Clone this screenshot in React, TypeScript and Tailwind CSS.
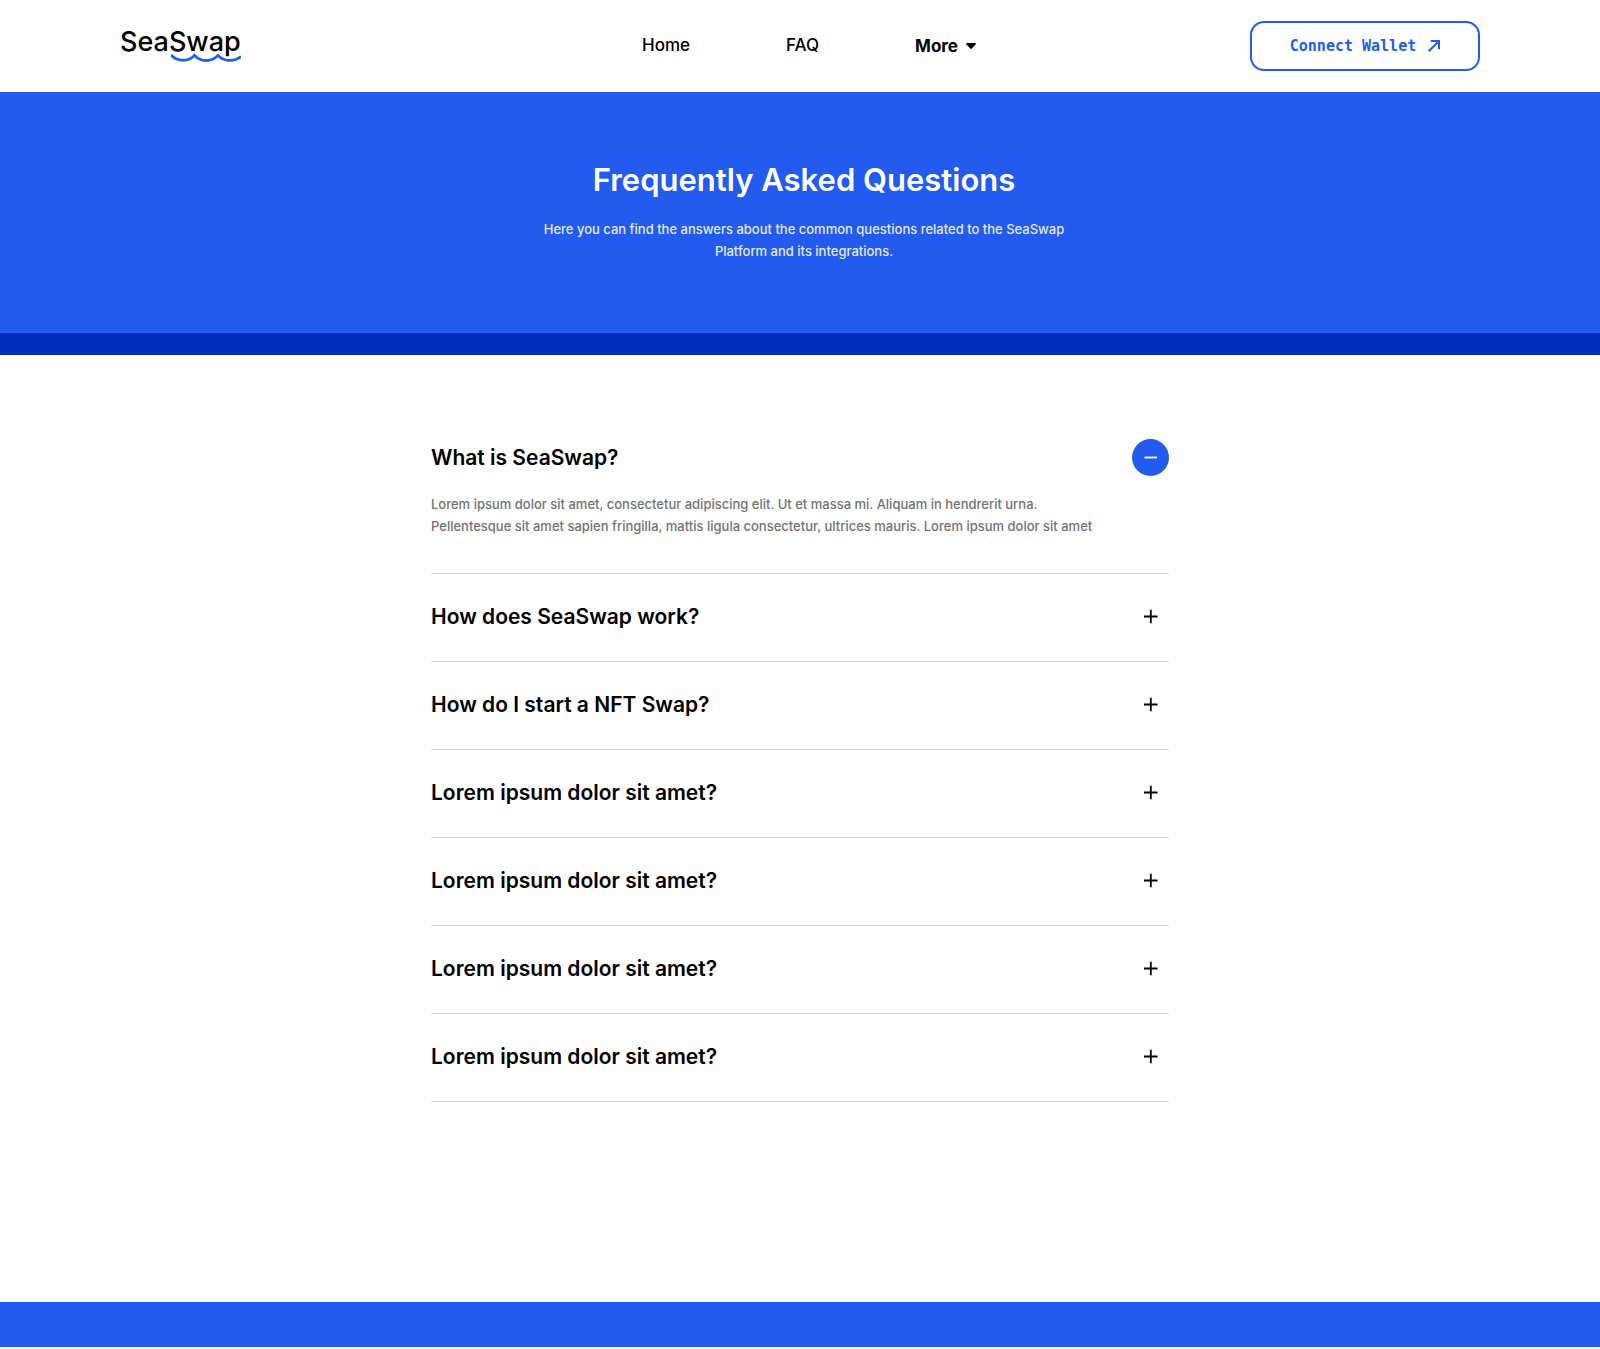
import { useState } from "react";

type Item = { question: string; answer: string[] };

const lorem = [
  "Lorem ipsum dolor sit amet, consectetur adipiscing elit. Ut et massa mi. Aliquam in hendrerit urna.",
  "Pellentesque sit amet sapien fringilla, mattis ligula consectetur, ultrices mauris. Lorem ipsum dolor sit amet",
];

const items: Item[] = [
  { question: "What is SeaSwap?", answer: lorem },
  { question: "How does SeaSwap work?", answer: lorem },
  { question: "How do I start a NFT Swap?", answer: lorem },
  { question: "Lorem ipsum dolor sit amet?", answer: lorem },
  { question: "Lorem ipsum dolor sit amet?", answer: lorem },
  { question: "Lorem ipsum dolor sit amet?", answer: lorem },
  { question: "Lorem ipsum dolor sit amet?", answer: lorem },
];

function Logo() {
  return (
    <a href="#" className="relative mb-2 justify-self-start text-[27px] leading-8 font-medium">
      SeaSwap
      <svg
        className="absolute right-0 -bottom-1 h-[9px] w-[70px]"
        viewBox="0 0 70 9"
        fill="none"
        stroke="#225BEE"
        strokeWidth="2.8"
        aria-hidden="true"
      >
        <path d="M0 2C6 8.6 17 9.2 23.5 2.4C30 9.2 40.5 9.2 47 2.4C53 9 63 8.8 70 3.6" />
      </svg>
    </a>
  );
}

function Header() {
  return (
    <header className="grid h-[92px] grid-cols-[1fr_auto_1fr] items-center px-[120px]">
      <Logo />
      <nav className="flex items-center gap-24 pl-[18px] text-[17px] leading-6 font-medium">
        <a href="#" className="pb-0.5">Home</a>
        <a href="#" className="pb-0.5">FAQ</a>
        <button type="button" className="flex items-center gap-2 font-bold">
          More
          <svg className="h-[6px] w-[10px]" viewBox="0 0 10 6" aria-hidden="true">
            <path d="M1 0H9C10 0 10.2 0.9 9.6 1.5L5.8 5.6C5.4 6 4.6 6 4.2 5.6L0.4 1.5C-0.2 0.9 0 0 1 0Z" fill="black" />
          </svg>
        </button>
      </nav>
      <button
        type="button"
        className="flex h-[50px] w-[230px] items-center justify-center gap-3 justify-self-end rounded-[14px] border-2 border-[#225BEE] font-['DejaVu_Sans_Mono',monospace] text-[15px] font-bold text-[#225BEE]"
      >
        Connect Wallet
        <svg className="h-3 w-3" viewBox="0 0 12 12" fill="none" stroke="currentColor" strokeWidth="2" aria-hidden="true">
          <path d="M0.7 11.3L10.8 1.2M2.8 1H11V9.2" />
        </svg>
      </button>
    </header>
  );
}

function ToggleIcon({ open }: { open: boolean }) {
  return (
    <span
      className={
        open
          ? "grid h-[37px] w-[37px] shrink-0 place-items-center rounded-full bg-[#225BEE] text-white"
          : "grid h-[37px] w-[37px] shrink-0 place-items-center rounded-full text-black"
      }
    >
      <svg className="h-[15px] w-[15px]" viewBox="0 0 15 15" fill="none" stroke="currentColor" strokeWidth="1.8" aria-hidden="true">
        <path d={open ? "M1.5 7.5H14" : "M1 7.5H14.5M7.8 0.8V14.2"} />
      </svg>
    </span>
  );
}

export default function App() {
  const [openIndex, setOpenIndex] = useState(0);

  return (
    <div className="bg-white font-['Inter',sans-serif] text-black">
      <Header />
      <section className="border-b-[22px] border-[#0030BB] bg-[#225BEE] pt-[68px] pr-6 pb-[71px] pl-8 text-center text-white">
        <h1 className="text-[31px] leading-10 font-semibold">Frequently Asked Questions</h1>
        <p className="mx-auto mt-[18px] max-w-[540px] text-[13px] leading-[22px] font-medium text-[#E4E9F5]">
          Here you can find the answers about the common questions related to the SeaSwap Platform and its integrations.
        </p>
      </section>
      <main className="mx-auto max-w-[738px] pt-[60px] pb-[200px]">
        {items.map((item, i) => {
          const open = i === openIndex;
          return (
            <section key={i} className="border-b border-[#D8D8D8] pt-6 pb-[26px]">
              <h2>
                <button
                  type="button"
                  aria-expanded={open}
                  aria-controls={`answer-${i}`}
                  onClick={() => setOpenIndex(open ? -1 : i)}
                  className="flex w-full items-center justify-between text-left text-[21px] leading-7 font-semibold"
                >
                  {item.question}
                  <ToggleIcon open={open} />
                </button>
              </h2>
              <div
                id={`answer-${i}`}
                hidden={!open}
                className="mt-[17px] mb-[10px] text-[13px] leading-[22px] font-medium text-[#727272]"
              >
                {item.answer.map((line) => (
                  <p key={line}>{line}</p>
                ))}
              </div>
            </section>
          );
        })}
      </main>
      <footer className="h-[45px] bg-[#225BEE]" />
    </div>
  );
}
